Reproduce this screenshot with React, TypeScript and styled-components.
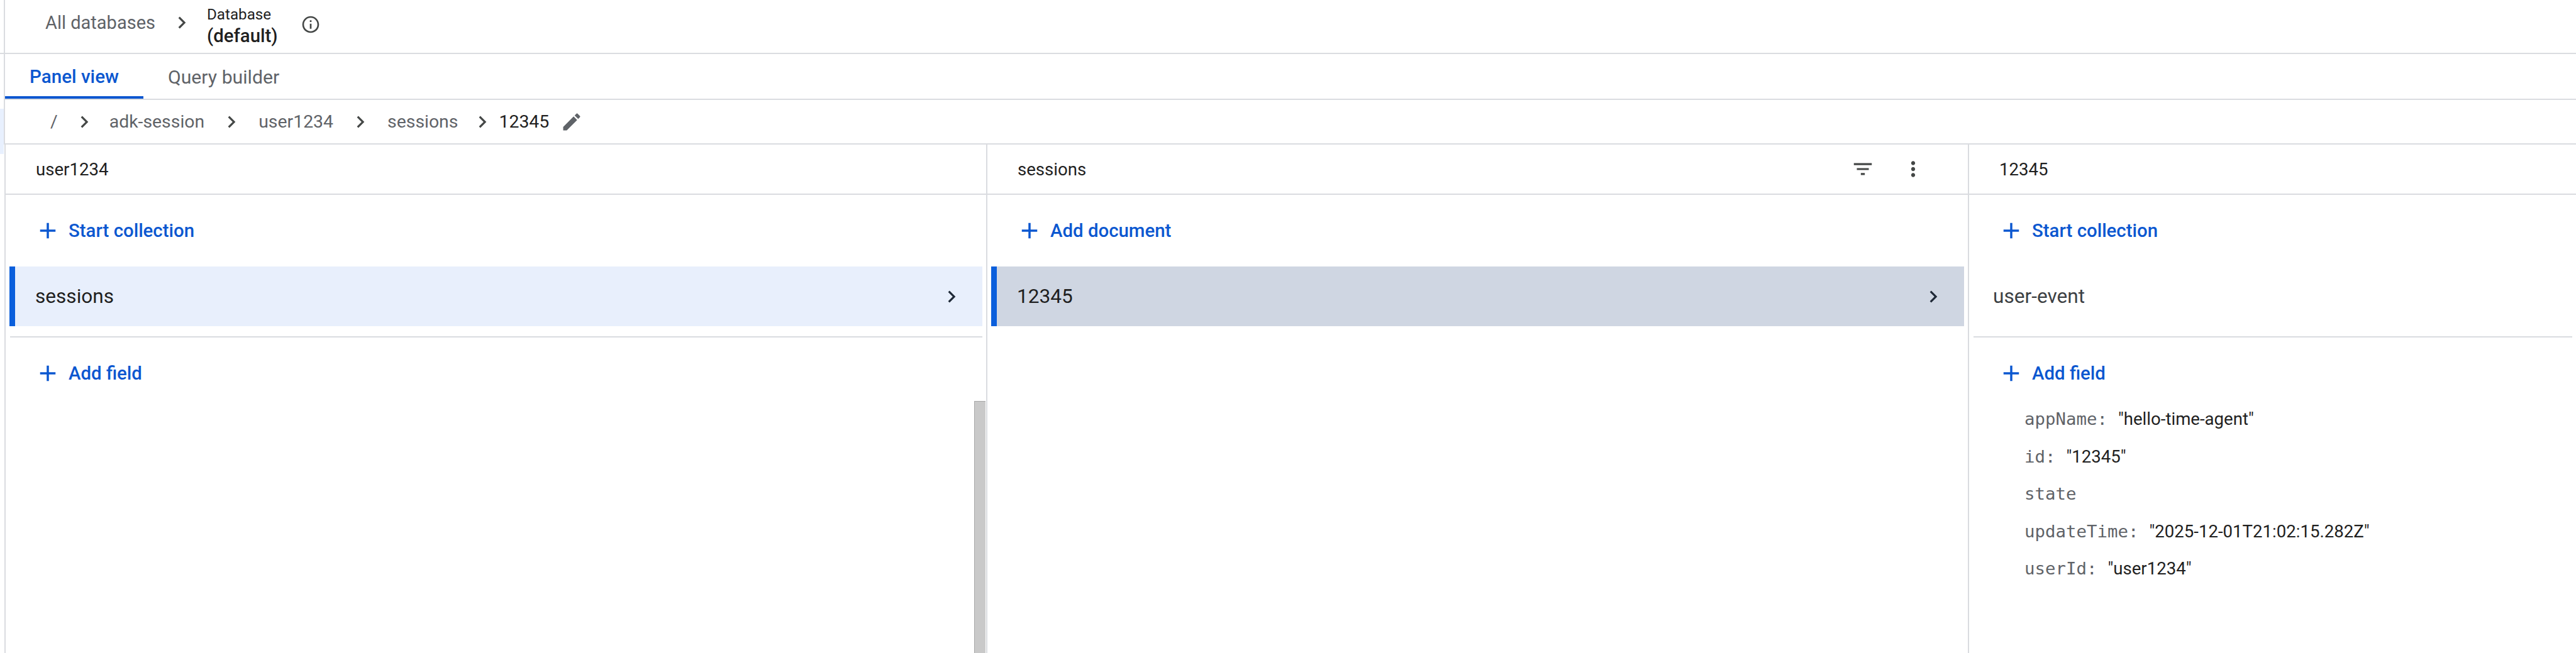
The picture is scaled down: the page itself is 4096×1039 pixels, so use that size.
import React from "react";
import styled, { createGlobalStyle } from "styled-components";

const Global = createGlobalStyle`
  html, body { margin: 0; padding: 0; background: #fff; }
  body { font-family: Roboto, "Liberation Sans", sans-serif; color: #1f1f1f; overflow: hidden; }
  * { box-sizing: border-box; }
`;

const Page = styled.div`
  width: 4096px;
  height: 1039px;
  display: flex;
  overflow: hidden;
  background: #fff;
`;

const Gutter = styled.aside`
  width: 6px;
  flex: none;
  display: flex;
  flex-direction: column;
`;
const GutterTop = styled.div`
  height: 86px;
  border-bottom: 2px solid #dadce0;
`;
const GutterTint = styled.div`
  height: 72px;
  margin-top: 87px;
  background: #e8f0fe;
`;

const Main = styled.main`
  flex: 1;
  min-width: 0;
  display: flex;
  flex-direction: column;
`;

const Bar = styled.div<{ $h: number }>`
  height: ${(p) => p.$h}px;
  flex: none;
  display: flex;
  align-items: center;
  border-left: 2px solid #dadce0;
  border-bottom: 2px solid #dadce0;
`;

const TopBar = styled(Bar)`
  padding: 0 0 13px 64px;
`;

const TopLink = styled.span`
  font-size: 29px;
  color: #5f6368;
`;

const Chevron = styled.svg<{ $before?: number; $after?: number }>`
  width: 38px;
  height: 38px;
  flex: none;
  fill: currentColor;
  margin: 0 ${(p) => p.$after ?? 24}px 0 ${(p) => p.$before ?? 24}px;
  color: #444746;
`;

const DbBlock = styled.div`
  display: flex;
  flex-direction: column;
  line-height: 33.6px;
  margin-top: 10px;
`;
const DbLabel = styled.span`
  font-size: 24.2px;
  color: #1f1f1f;
`;
const DbName = styled.span`
  font-size: 29.4px;
  font-weight: 500;
  color: #1f1f1f;
`;
const InfoIcon = styled.svg`
  width: 32px;
  height: 32px;
  fill: #444746;
  margin: 7px 0 0 36px;
`;

const TabsBar = styled(Bar)`
  align-items: stretch;
`;
const Tab = styled.div<{ $active?: boolean }>`
  display: flex;
  align-items: center;
  padding: 5px 39px 0;
  font-size: ${(p) => (p.$active ? 29.6 : 30.2)}px;
  font-weight: ${(p) => (p.$active ? 500 : 400)};
  color: ${(p) => (p.$active ? "#0b57d0" : "#5f6368")};
  border-bottom: 4px solid ${(p) => (p.$active ? "#0b57d0" : "transparent")};
`;

const CrumbBar = styled(Bar)`
  padding: 0 0 0 72px;
`;
const Crumb = styled.span<{ $current?: boolean }>`
  font-size: 28.4px;
  color: ${(p) => (p.$current ? "#1f1f1f" : "#5f6368")};
`;
const PencilIcon = styled.svg`
  width: 36px;
  height: 36px;
  fill: #5f6368;
  margin-left: 18px;
`;

const Columns = styled.div`
  flex: 1;
  min-height: 0;
  display: grid;
  grid-template-columns: 1561px 1561px 1fr;
  padding-left: 1px;
`;

const Column = styled.section`
  position: relative;
  display: flex;
  flex-direction: column;
  border-left: 2px solid #dadce0;
  min-width: 0;
`;

const ColumnHeader = styled.header`
  height: 80px;
  flex: none;
  display: flex;
  align-items: center;
  padding: 0 68px 0 48px;
  border-bottom: 2px solid #dadce0;
  font-size: 27.6px;
  color: #1f1f1f;
`;
const HeaderTitle = styled.span`
  flex: 1;
`;
const HeaderIcon = styled.svg`
  width: 38px;
  height: 38px;
  fill: #444746;
  margin-left: 42px;
`;

const Action = styled.div`
  height: 114px;
  flex: none;
  display: flex;
  align-items: center;
  padding-left: 46px;
  font-size: 29.4px;
  font-weight: 500;
  color: #0b57d0;
`;
const FieldAction = styled(Action)`
  height: 78px;
  margin-top: 18px;
`;
const PlusIcon = styled.svg`
  width: 42px;
  height: 42px;
  fill: #0b57d0;
  margin-right: 12px;
`;

const ListRow = styled.div<{ $state: "open" | "focus" | "plain" }>`
  height: 95px;
  flex: none;
  display: flex;
  align-items: center;
  justify-content: space-between;
  margin: 0 6px;
  padding: 0 30px 0 32px;
  font-size: 31.6px;
  color: ${(p) => (p.$state === "plain" ? "#3c4043" : "#1f1f1f")};
  background: ${(p) => (p.$state === "open" ? "#e8effc" : p.$state === "focus" ? "#cfd6e2" : "transparent")};
  border-left: ${(p) => (p.$state === "plain" ? "0" : "9px solid #0b5fdc")};
`;
const RowChevron = styled.svg`
  width: 38px;
  height: 38px;
  fill: #1f2937;
`;
const Divider = styled.hr`
  flex: none;
  height: 2px;
  margin: 16px 6px 0 7px;
  border: 0;
  background: #dadce0;
`;

const Fields = styled.div`
  padding: 4px 0 0 88px;
`;
const Field = styled.div`
  height: 59.5px;
  display: flex;
  align-items: center;
  gap: 17px;
`;
const FieldKey = styled.span`
  font-family: "DejaVu Sans Mono", "Liberation Mono", monospace;
  font-size: 27.4px;
  color: #5f6368;
`;
const FieldValue = styled.span`
  font-size: 27.6px;
  color: #1f1f1f;
`;

const Scrollbar = styled.div`
  position: absolute;
  top: 408px;
  bottom: 0;
  right: 1px;
  width: 18px;
  background: #c9c9c9;
  border-left: 1.5px solid #a8a8a8;
  border-top: 1px solid #a8a8a8;
`;

const CHEVRON = "M10 6L8.59 7.41 13.17 12l-4.58 4.59L10 18l6-6z";
const PLUS = "M19 13h-6v6h-2v-6H5v-2h6V5h2v6h6v2z";

const ChevronIcon = ({ before, after }: { before?: number; after?: number }) => (
  <Chevron $before={before} $after={after} viewBox="0 0 24 24"><path d={CHEVRON} /></Chevron>
);

const AddAction = ({ label }: { label: string }) => (
  <Action>
    <PlusIcon viewBox="0 0 24 24"><path d={PLUS} /></PlusIcon>
    {label}
  </Action>
);

const AddField = () => (
  <FieldAction>
    <PlusIcon viewBox="0 0 24 24"><path d={PLUS} /></PlusIcon>
    Add field
  </FieldAction>
);

const Row = ({ label, state }: { label: string; state: "open" | "focus" | "plain" }) => (
  <ListRow $state={state}>
    {label}
    {state !== "plain" && (
      <RowChevron viewBox="0 0 24 24"><path d={CHEVRON} /></RowChevron>
    )}
  </ListRow>
);

const fields: [string, string?][] = [
  ["appName:", '"hello-time-agent"'],
  ["id:", '"12345"'],
  ["state"],
  ["updateTime:", '"2025-12-01T21:02:15.282Z"'],
  ["userId:", '"user1234"'],
];

export default function App() {
  return (
    <Page>
      <Global />
      <Gutter>
        <GutterTop />
        <GutterTint />
      </Gutter>
      <Main>
        <TopBar $h={86}>
          <TopLink>All databases</TopLink>
          <ChevronIcon before={23} after={21} />
          <DbBlock>
            <DbLabel>Database</DbLabel>
            <DbName>(default)</DbName>
          </DbBlock>
          <InfoIcon viewBox="0 0 24 24">
            <path d="M11 7h2v2h-2zm0 4h2v6h-2zm1-9C6.48 2 2 6.48 2 12s4.48 10 10 10 10-4.48 10-10S17.52 2 12 2zm0 18c-4.41 0-8-3.59-8-8s3.59-8 8-8 8 3.59 8 8-3.59 8-8 8z" />
          </InfoIcon>
        </TopBar>
        <TabsBar $h={73}>
          <Tab $active>Panel view</Tab>
          <Tab>Query builder</Tab>
        </TabsBar>
        <CrumbBar $h={71}>
          <Crumb>/</Crumb>
          <ChevronIcon before={23} after={21} />
          <Crumb>adk-session</Crumb>
          <ChevronIcon />
          <Crumb>user1234</Crumb>
          <ChevronIcon />
          <Crumb>sessions</Crumb>
          <ChevronIcon before={20} after={7} />
          <Crumb $current>12345</Crumb>
          <PencilIcon viewBox="0 0 24 24">
            <path d="M3 17.25V21h3.75L17.81 9.94l-3.75-3.75L3 17.25zM20.71 7.04c.39-.39.39-1.02 0-1.41l-2.34-2.34c-.39-.39-1.02-.39-1.41 0l-1.83 1.83 3.75 3.75 1.83-1.83z" />
          </PencilIcon>
        </CrumbBar>
        <Columns>
          <Column>
            <ColumnHeader><HeaderTitle>user1234</HeaderTitle></ColumnHeader>
            <AddAction label="Start collection" />
            <Row label="sessions" state="open" />
            <Divider />
            <AddField />
            <Scrollbar />
          </Column>
          <Column>
            <ColumnHeader>
              <HeaderTitle>sessions</HeaderTitle>
              <HeaderIcon viewBox="0 0 24 24"><path d="M10 18h4v-2h-4v2zM3 6v2h18V6H3zm3 7h12v-2H6v2z" /></HeaderIcon>
              <HeaderIcon viewBox="0 0 24 24"><path d="M12 8c1.1 0 2-.9 2-2s-.9-2-2-2-2 .9-2 2 .9 2 2 2zm0 2c-1.1 0-2 .9-2 2s.9 2 2 2 2-.9 2-2-.9-2-2-2zm0 6c-1.1 0-2 .9-2 2s.9 2 2 2 2-.9 2-2-.9-2-2-2z" /></HeaderIcon>
            </ColumnHeader>
            <AddAction label="Add document" />
            <Row label="12345" state="focus" />
          </Column>
          <Column>
            <ColumnHeader><HeaderTitle>12345</HeaderTitle></ColumnHeader>
            <AddAction label="Start collection" />
            <Row label="user-event" state="plain" />
            <Divider />
            <AddField />
            <Fields>
              {fields.map(([k, v]) => (
                <Field key={k}>
                  <FieldKey>{k}</FieldKey>
                  {v && <FieldValue>{v}</FieldValue>}
                </Field>
              ))}
            </Fields>
          </Column>
        </Columns>
      </Main>
    </Page>
  );
}
